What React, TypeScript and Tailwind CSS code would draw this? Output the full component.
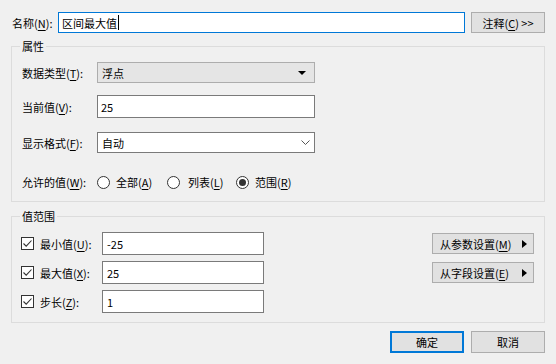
const FONT = "font-['Noto_Sans_CJK_SC','Noto_Sans',sans-serif]";

function Key({ k }: { k: string }) {
  return (
    <>
      (<u className="underline-offset-2">{k}</u>)
    </>
  );
}

function CheckBox() {
  return (
    <span className="flex h-[13px] w-[13px] items-center justify-center border border-[#333] bg-white">
      <svg width="11" height="11" viewBox="0 0 11 11">
        <path d="M1.5 5.5 L4.2 8.2 L9.5 2.5" fill="none" stroke="#333" strokeWidth="1.1" />
      </svg>
    </span>
  );
}

function Radio({ on }: { on?: boolean }) {
  return (
    <span className="flex h-[13px] w-[13px] items-center justify-center rounded-full border border-[#333] bg-white">
      {on && <span className="h-[7px] w-[7px] rounded-full bg-[#333]" />}
    </span>
  );
}

function SideButton({ label, k }: { label: string; k: string }) {
  return (
    <button className="flex h-[21px] w-[102px] items-center border border-[#adadad] bg-[#e1e1e1] pl-[7px] pr-[6px] text-[11px] text-black">
      <span className="flex-1 text-left">
        {label}
        <Key k={k} />
      </span>
      <svg width="5" height="8" viewBox="0 0 5 8">
        <path d="M0 0 L5 4 L0 8 Z" fill="#000" />
      </svg>
    </button>
  );
}

export default function App() {
  return (
    <div className={`h-[364px] w-[556px] bg-[#f0f0f0] text-[11px] leading-4 text-black ${FONT}`}>

      {/* name row */}
      <div className="flex items-center pl-[12px] pr-[11px] pt-[12px]">
        <span className="w-[46px]">
          名称<Key k="N" />:
        </span>
        <div className="flex h-[21px] w-[407px] items-center border border-[#0078d7] bg-white pl-[3px]">
          区间最大值
          <span className="ml-px h-[15px] w-px bg-black" />
        </div>
        <button className="ml-[6px] h-[21px] w-[74px] border border-[#adadad] bg-[#e1e1e1] text-[11px]">
          注释<Key k="C" /> &gt;&gt;
        </button>
      </div>

      {/* 属性 */}
      <fieldset className="mx-[11px] mt-[5px] h-[164px] border border-[#dcdcdc] pl-[8px] pr-[10px]">
        <legend className="px-[2px]">属性</legend>

        <div className="mt-[8px] flex items-center">
          <span className="w-[77px] pl-[2px]">
            数据类型<Key k="T" />:
          </span>
          <div className="flex h-[21px] w-[218px] items-center justify-between border border-[#adadad] bg-[#e5e5e5] pl-[4px] pr-[8px]">
            <span>浮点</span>
            <svg width="8" height="4" viewBox="0 0 8 4">
              <path d="M0 0 L8 0 L4 4 Z" fill="#000" />
            </svg>
          </div>
        </div>

        <div className="mt-[12px] flex items-center">
          <span className="w-[77px] pl-[2px]">
            当前值<Key k="V" />:
          </span>
          <div className="flex h-[23px] w-[218px] items-center border border-[#7a7a7a] bg-white pl-[3px]">
            25
          </div>
        </div>

        <div className="mt-[14px] flex items-center">
          <span className="w-[77px] pl-[2px]">
            显示格式<Key k="F" />:
          </span>
          <div className="flex h-[21px] w-[218px] items-center justify-between border border-[#7a7a7a] bg-white pl-[4px] pr-[4px]">
            <span>自动</span>
            <svg width="9" height="5" viewBox="0 0 9 5">
              <path d="M0.5 0.5 L4.5 4.5 L8.5 0.5" fill="none" stroke="#555" strokeWidth="1" />
            </svg>
          </div>
        </div>

        <div className="mt-[21px] flex h-4 items-center">
          <span className="w-[77px] pl-[2px]">
            允许的值<Key k="W" />:
          </span>
          <Radio />
          <span className="ml-[6px] w-[51px]">
            全部<Key k="A" />
          </span>
          <Radio />
          <span className="ml-[8px] w-[48px]">
            列表<Key k="L" />
          </span>
          <Radio on />
          <span className="ml-[6px]">
            范围<Key k="R" />
          </span>
        </div>
      </fieldset>

      {/* 值范围 */}
      <fieldset className="mx-[11px] mt-[6px] h-[115px] border border-[#dcdcdc] pl-[9px] pr-[10px]">
        <legend className="-ml-px px-[2px]">值范围</legend>

        <div className="mt-[8px] flex justify-between">
          <div className="flex flex-col gap-[6px]">
            {[
              ["最小值", "U", "-25"],
              ["最大值", "X", "25"],
              ["步长", "Z", "1"],
            ].map(([label, k, v]) => (
              <div key={k} className="flex items-center">
                <CheckBox />
                <span className="ml-[6px] w-[62px]">
                  {label}
                  <Key k={k} />:
                </span>
                <div className="flex h-[23px] w-[162px] items-center border border-[#7a7a7a] bg-white pl-[4px]">
                  {v}
                </div>
              </div>
            ))}
          </div>

          <div className="flex flex-col gap-[8px] pt-px">
            <SideButton label="从参数设置" k="M" />
            <SideButton label="从字段设置" k="E" />
          </div>
        </div>
      </fieldset>

      {/* dialog buttons */}
      <div className="mt-[8px] flex justify-end gap-[7px] pr-[11px]">
        <button className="h-[22px] w-[74px] border-2 border-[#0078d7] bg-[#e1e1e1] text-[11px]">
          确定
        </button>
        <button className="h-[22px] w-[74px] border border-[#adadad] bg-[#e1e1e1] text-[11px]">
          取消
        </button>
      </div>

    </div>
  );
}
